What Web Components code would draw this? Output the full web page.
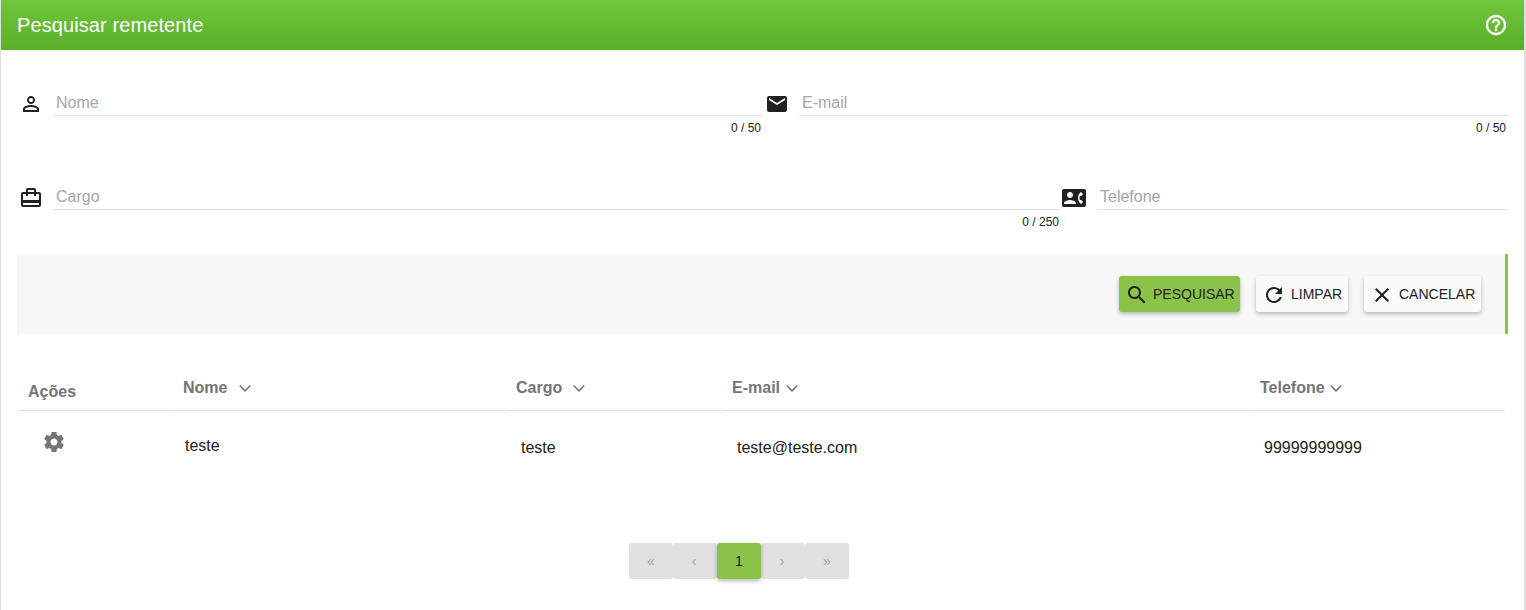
<!DOCTYPE html>
<html lang="pt-BR">
<head>
<meta charset="utf-8">
<title>Pesquisar remetente</title>
<style>
html,body{margin:0;padding:0;height:100%;overflow:hidden;background:#fff}
body{font-family:"Liberation Sans",Arial,sans-serif;font-size:16px;color:#212121}
</style>
</head>
<body>
<search-page></search-page>
<script>
const ICONS = {
  person:'M12 5.9c1.16 0 2.1.94 2.1 2.1s-.94 2.1-2.1 2.1S9.9 9.16 9.9 8s.94-2.1 2.1-2.1m0 9c2.97 0 6.1 1.46 6.1 2.1v1.1H5.9V17c0-.64 3.13-2.1 6.1-2.1M12 4C9.79 4 8 5.79 8 8s1.79 4 4 4 4-1.79 4-4-1.79-4-4-4zm0 9c-2.67 0-8 1.34-8 4v3h16v-3c0-2.66-5.33-4-8-4z',
  mail:'M20 4H4c-1.1 0-1.99.9-1.99 2L2 18c0 1.1.9 2 2 2h16c1.1 0 2-.9 2-2V6c0-1.1-.9-2-2-2zm0 4l-8 5-8-5V6l8 5 8-5v2z',
  travel:'M20 6h-3V4c0-1.11-.89-2-2-2H9c-1.11 0-2 .89-2 2v2H4c-1.11 0-2 .89-2 2v11c0 1.11.89 2 2 2h16c1.11 0 2-.89 2-2V8c0-1.11-.89-2-2-2zM9 4h6v2H9V4zm11 15H4v-2h16v2zm0-5H4V8h3v2h2V8h6v2h2V8h3v6z',
  contact:'M22 3H2C.9 3 0 3.9 0 5v14c0 1.1.9 2 2 2h20c1.1 0 1.99-.9 1.99-2L24 5c0-1.1-.9-2-2-2zM8 6c1.66 0 3 1.34 3 3s-1.34 3-3 3-3-1.34-3-3 1.34-3 3-3zm6 12H2v-1c0-2 4-3.1 6-3.1s6 1.1 6 3.1v1zm3.85-4h1.64L21 16l-1.99 1.99c-1.31-.98-2.28-2.38-2.73-3.99-.18-.64-.28-1.31-.28-2s.1-1.36.28-2c.45-1.62 1.42-3.01 2.73-3.99L21 8l-1.51 2h-1.64c-.22.63-.35 1.3-.35 2s.13 1.37.35 2z',
  help:'M11 18h2v-2h-2v2zm1-16C6.48 2 2 6.48 2 12s4.48 10 10 10 10-4.48 10-10S17.52 2 12 2zm0 18c-4.41 0-8-3.59-8-8s3.59-8 8-8 8 3.59 8 8-3.59 8-8 8zm0-14c-2.21 0-4 1.79-4 4h2c0-1.1.9-2 2-2s2 .9 2 2c0 2-3 1.75-3 5h2c0-2.25 3-2.5 3-5 0-2.21-1.79-4-4-4z',
  search:'M15.5 14h-.79l-.28-.27C15.41 12.59 16 11.11 16 9.5 16 5.91 13.09 3 9.5 3S3 5.91 3 9.5 5.91 16 9.5 16c1.61 0 3.09-.59 4.23-1.57l.27.28v.79l5 4.99L20.49 19l-4.99-5zm-6 0C7.01 14 5 11.99 5 9.5S7.01 5 9.5 5 14 7.01 14 9.5 11.99 14 9.5 14z',
  refresh:'M17.65 6.35C16.2 4.9 14.21 4 12 4c-4.42 0-7.99 3.58-7.99 8s3.57 8 7.99 8c3.73 0 6.84-2.55 7.73-6h-2.08c-.82 2.33-3.04 4-5.65 4-3.31 0-6-2.69-6-6s2.69-6 6-6c1.66 0 3.14.69 4.22 1.78L13 11h7V4l-2.35 2.35z',
  close:'M19 6.41L17.59 5 12 10.59 6.41 5 5 6.41 10.59 12 5 17.59 6.41 19 12 13.41 17.59 19 19 17.59 13.41 12z',
  more:'M16.7 9L12 13.7 7.3 9 6.2 10.1l5.8 5.8 5.8-5.8z',
  settings:'M19.43 12.98c.04-.32.07-.64.07-.98s-.03-.66-.07-.98l2.11-1.65c.19-.15.24-.42.12-.64l-2-3.46c-.12-.22-.39-.3-.61-.22l-2.49 1c-.52-.4-1.08-.73-1.69-.98l-.38-2.65C14.46 2.18 14.25 2 14 2h-4c-.25 0-.46.18-.49.42l-.38 2.65c-.61.25-1.17.59-1.69.98l-2.49-1c-.23-.09-.49 0-.61.22l-2 3.46c-.13.22-.07.49.12.64l2.11 1.65c-.04.32-.07.65-.07.98s.03.66.07.98l-2.11 1.65c-.19.15-.24.42-.12.64l2 3.46c.12.22.39.3.61.22l2.49-1c.52.4 1.08.73 1.69.98l.38 2.65c.03.24.24.42.49.42h4c.25 0 .46-.18.49-.42l.38-2.65c.61-.25 1.17-.59 1.69-.98l2.49 1c.23.09.49 0 .61-.22l2-3.46c.12-.22.07-.49-.12-.64l-2.11-1.65zM12 15.5c-1.93 0-3.5-1.57-3.5-3.5s1.57-3.5 3.5-3.5 3.5 1.57 3.5 3.5-1.57 3.5-3.5 3.5z'
};
function define(name, render) {
  customElements.define(name, class extends HTMLElement {
    constructor() { super(); this.attachShadow({mode: 'open'}); }
    connectedCallback() { this.shadowRoot.innerHTML = render(this); }
  });
}
const attr = (el, n) => el.getAttribute(n) || '';

define('md-icon', el => `<style>:host{display:block;flex:none;width:24px;height:24px}svg{display:block;overflow:visible}path{stroke:currentColor;stroke-width:var(--bold,0)}</style>
<svg width="24" height="24" viewBox="0 0 24 24" fill="currentColor"><path d="${ICONS[attr(el,'name')]}"/></svg>`);

define('page-toolbar', () => `<style>
:host{display:flex;box-sizing:border-box;height:50px;align-items:center;justify-content:space-between;padding:0 16px;color:#fff;background:linear-gradient(#70c63b,#5aae2a);font-size:20px;letter-spacing:.1px}
h1{margin:0;font:inherit;line-height:24px}
md-icon{--bold:.4px}</style>
<h1><slot></slot></h1><md-icon name="help"></md-icon>`);

define('text-field', el => `<style>
:host{display:grid;grid-template-columns:36px 1fr;align-items:start;align-content:start}
md-icon{margin:5px 0 -1px var(--shift,2.3px)}
.line{height:29px;box-sizing:border-box;border-bottom:1px solid #e0e0e0;padding:7px 2px 0 3px;line-height:18px;color:#a6a6a6}
.count{grid-column:2;justify-self:end;font-size:12px;line-height:14px;padding:5px 2px 0 0}</style>
<md-icon name="${attr(el,'icon')}"></md-icon><div class="line"><slot></slot></div><div class="count">${attr(el,'count')}</div>`);

define('md-button', el => `<style>
:host{display:flex;box-sizing:border-box;height:36px;padding:1px 0 0 6px;border-radius:3px;background:#fafafa;font-size:14px;box-shadow:0 2px 4px 0 rgba(0,0,0,.26);white-space:nowrap;align-items:center}
:host([primary]){background:#8bc34a}
span{margin:-2px 0 0 var(--gap,5px);line-height:16px}</style>
<md-icon name="${attr(el,'icon')}"></md-icon><span><slot></slot></span>`);

define('action-bar', () => `<style>
:host{display:flex;box-sizing:border-box;height:80px;align-items:center;justify-content:flex-end;gap:16px;padding:2px 24px 2px 0;background:#f7f7f7;border-right:3px solid #8bc34a}</style><slot></slot>`);

define('head-cell', el => `<style>
:host{display:flex;box-sizing:border-box;height:48px;border-bottom:1px solid #e0e0e0;font-weight:700;color:#757575;padding:16px 0 0 9px;line-height:18px}
md-icon{margin:-3px 0 0 var(--gap,0)}</style>
<slot></slot>${el.hasAttribute('plain') ? '' : '<md-icon name="more"></md-icon>'}`);

define('data-cell', () => `<style>:host{display:block;line-height:18px}</style><slot></slot>`);

define('result-table', () => `<style>
:host{display:grid;grid-template-columns:153px 331px 214px 525px 255px;column-gap:2px;margin:29px 0 0 2px}</style><slot></slot>`);

define('page-item', () => `<style>
:host{display:block;box-sizing:border-box;width:44px;height:36px;padding-right:var(--nudge,0);border-radius:3px;background:#e0e0e0;color:#a0a0a0;text-align:center;font-size:14px;line-height:37px}
:host([active]){position:relative;background:#8bc34a;color:#212121;box-shadow:0 2px 4px 0 rgba(0,0,0,.28)}</style><slot></slot>`);

define('page-nav', () => `<style>:host{display:flex;padding:18px 0 0 612px}</style><slot></slot>`);

define('search-page', () => `<style>
:host{display:block;box-sizing:border-box;height:610px;border-left:1px solid #e0e0e0;border-right:2px solid #e0e0e0}
main{padding:0 16px}
.row{display:grid;box-sizing:border-box;padding-top:37px}
.one{grid-template-columns:746px 745px;height:94px}
.two{grid-template-columns:1044px 447px;height:110px}
result-table{height:162px;align-content:start}
</style>
<page-toolbar>Pesquisar remetente</page-toolbar>
<main>
<div class="row one">
<text-field icon="person" count="0 / 50">Nome</text-field>
<text-field icon="mail" count="0 / 50" style="--shift:1.5px">E-mail</text-field>
</div>
<div class="row two">
<text-field icon="travel" count="0 / 250">Cargo</text-field>
<text-field icon="contact" style="--shift:1.4px">Telefone</text-field>
</div>
<action-bar>
<md-button primary icon="search" style="width:121px;--gap:4px">PESQUISAR</md-button>
<md-button icon="refresh" style="width:92px">LIMPAR</md-button>
<md-button icon="close" style="width:117px">CANCELAR</md-button>
</action-bar>
<result-table>
<head-cell plain style="padding-top:20px">Ações</head-cell>
<head-cell style="--gap:5.3px">Nome</head-cell>
<head-cell style="--gap:4.7px">Cargo</head-cell>
<head-cell>E-mail</head-cell>
<head-cell style="padding-left:10px;--gap:-.8px">Telefone</head-cell>
<data-cell style="padding:19px 0 0 23px;color:#757575"><md-icon name="settings"></md-icon></data-cell>
<data-cell style="padding:26px 0 0 11px">teste</data-cell>
<data-cell style="padding:28px 0 0 14px">teste</data-cell>
<data-cell style="padding:28px 0 0 14px">teste@teste.com</data-cell>
<data-cell style="padding:28px 0 0 14px">99999999999</data-cell>
</result-table>
<page-nav>
<page-item>«</page-item><page-item style="--nudge:2px">‹</page-item><page-item active>1</page-item><page-item style="--nudge:2px">›</page-item><page-item>»</page-item>
</page-nav>
</main>`);
</script>
</body>
</html>
